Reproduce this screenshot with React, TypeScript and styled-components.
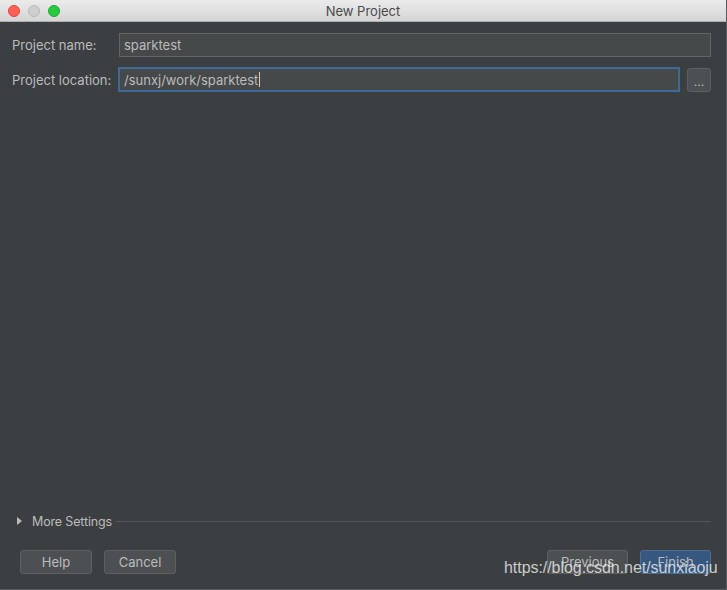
import React from "react";
import styled, { createGlobalStyle } from "styled-components";

const Global = createGlobalStyle`
  html, body { margin: 0; padding: 0; background: #3c3f41; }
  body { font-family: Inter, "Liberation Sans", Arial, sans-serif; }
  * { box-sizing: border-box; }
`;

const Window = styled.div`
  position: relative;
  width: 727px;
  height: 590px;
  display: flex;
  flex-direction: column;
  background: #3c3f41;
  border-right: 1px solid #5a5d5f;
  border-bottom: 1px solid #5a5d5f;
  overflow: hidden;
`;

const TitleBar = styled.div`
  height: 22px;
  flex: none;
  display: flex;
  align-items: center;
  position: relative;
  background: linear-gradient(#ebebeb, #d5d5d5);
  border-bottom: 1px solid #b0b0b0;
  padding-left: 8px;
  gap: 8px;
`;

const Light = styled.span<{ $c: string; $b: string }>`
  width: 12px;
  height: 12px;
  border-radius: 50%;
  background: ${(p) => p.$c};
  border: 0.5px solid ${(p) => p.$b};
`;

const Title = styled.div`
  position: absolute;
  left: 0;
  right: 0;
  top: 0;
  bottom: 0;
  display: flex;
  align-items: center;
  justify-content: center;
  font-size: 13px;
  color: #4a4a4a;
  pointer-events: none;
`;

const Body = styled.div`
  flex: 1;
  display: flex;
  flex-direction: column;
  padding: 11px 15px 15px 12px;
`;

const Form = styled.div`
  display: grid;
  grid-template-columns: 106px 1fr;
  row-gap: 10px;
  align-items: center;
`;

const Label = styled.label`
  font-size: 13px;
  color: #bbbbbb;
`;

const FieldWrap = styled.div`
  display: flex;
  gap: 7px;
  align-items: center;
`;

const Field = styled.div<{ $focus?: boolean }>`
  flex: 1;
  height: ${(p) => (p.$focus ? "25px" : "24px")};
  display: flex;
  align-items: center;
  background: #45494a;
  border: ${(p) => (p.$focus ? "2px solid #3e6a99" : "1px solid #646464")};
  margin-left: ${(p) => (p.$focus ? "0" : "1px")};
  padding-left: 4px;
  font-size: 13px;
  color: #bbbbbb;
`;

const Caret = styled.span`
  display: inline-block;
  width: 1px;
  height: 15px;
  background: #cccccc;
  margin-left: 1px;
`;

const SmallButton = styled.div`
  width: 24px;
  height: 24px;
  border-radius: 3px;
  background: #4c5052;
  border: 1px solid #5e6060;
  color: #bbbbbb;
  font-size: 12px;
  display: flex;
  align-items: center;
  justify-content: center;
  padding-top: 3px;
`;

const Spacer = styled.div`
  flex: 1;
`;

const MoreRow = styled.div`
  display: flex;
  align-items: center;
  padding-left: 5px;
  height: 16px;
  margin-bottom: 21px;
`;

const Triangle = styled.span`
  width: 0;
  height: 0;
  border-top: 4px solid transparent;
  border-bottom: 4px solid transparent;
  border-left: 5px solid #bbbbbb;
  margin-right: 10px;
`;

const MoreText = styled.span`
  font-size: 12.5px;
  color: #bbbbbb;
  margin-right: 4px;
  letter-spacing: -0.15px;
`;

const Line = styled.div`
  flex: 1;
  height: 1px;
  background: #515658;
`;

const ButtonRow = styled.div`
  display: flex;
  align-items: center;
  padding-left: 8px;
`;

const Group = styled.div`
  display: flex;
  gap: 12px;
`;

const Button = styled.div<{ $w: number; $primary?: boolean }>`
  width: ${(p) => p.$w}px;
  height: 24px;
  border-radius: 3px;
  display: flex;
  align-items: center;
  justify-content: center;
  font-size: 13px;
  color: #bbbbbb;
  background: ${(p) => (p.$primary ? "#365880" : "#4c5052")};
  border: 1px solid ${(p) => (p.$primary ? "#4c708c" : "#5e6060")};
`;

const Watermark = styled.div`
  position: absolute;
  left: 504px;
  top: 559px;
  font-size: 16px;
  color: rgba(230, 230, 230, 0.85);
  font-family: "Liberation Sans", Arial, sans-serif;
  letter-spacing: -0.05px;
  pointer-events: none;
`;

export default function App() {
  return (
    <>
      <Global />
      <Window>
        <TitleBar>
          <Light $c="#fe5f57" $b="#e0443e" />
          <Light $c="#cfcfcf" $b="#b8b8b8" />
          <Light $c="#28c940" $b="#1aab29" />
          <Title>New Project</Title>
        </TitleBar>
        <Body>
          <Form>
            <Label>Project name:</Label>
            <FieldWrap>
              <Field>sparktest</Field>
            </FieldWrap>
            <Label>Project location:</Label>
            <FieldWrap>
              <Field $focus>
                /sunxj/work/sparktest
                <Caret />
              </Field>
              <SmallButton>...</SmallButton>
            </FieldWrap>
          </Form>
          <Spacer />
          <MoreRow>
            <Triangle />
            <MoreText>More Settings</MoreText>
            <Line />
          </MoreRow>
          <ButtonRow>
            <Group>
              <Button $w={72}>Help</Button>
              <Button $w={72}>Cancel</Button>
            </Group>
            <Spacer />
            <Group>
              <Button $w={81}>Previous</Button>
              <Button $w={71} $primary>
                Finish
              </Button>
            </Group>
          </ButtonRow>
        </Body>
        <Watermark>https://blog.csdn.net/sunxiaoju</Watermark>
      </Window>
    </>
  );
}
